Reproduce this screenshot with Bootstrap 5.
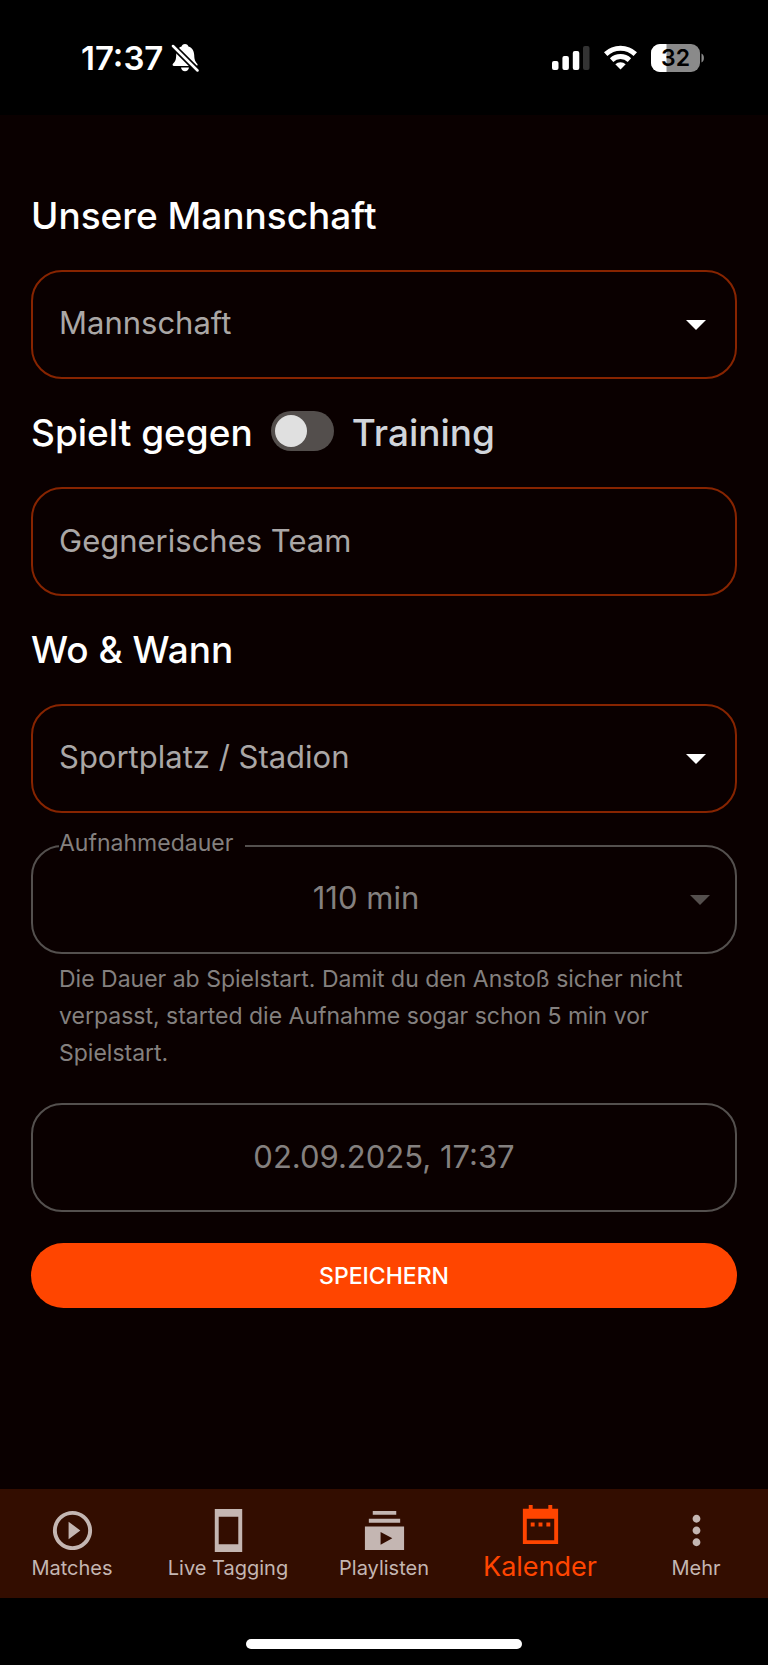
<!DOCTYPE html>
<html lang="de">
<head>
<meta charset="utf-8">
<meta name="viewport" content="width=device-width, initial-scale=1">
<title>Kalender</title>
<link href="https://cdn.jsdelivr.net/npm/bootstrap@5.3.0/dist/css/bootstrap.min.css" rel="stylesheet">
<style>
  body { background: #000; color: #fff; font-family: Inter, "Liberation Sans", sans-serif; }
  svg { display: block; }
  .statusbar { height: 115px; padding: 0 64px 0 81px; }
  .clock { font-size: 33px; font-weight: 600; line-height: 40px; }
  .status-icons { gap: 14px; }
  .app { background: #0a0000; padding: 47px 31px 0; }
  .section-head { height: 108px; padding-bottom: 1px; gap: 18px; }
  .section-head h2, .section-head label { font-size: 37px; font-weight: 500; line-height: 48px; margin: 0; }
  .section-head label { color: #d1d5db; }
  .field.form-control, .field.form-select {
    height: 109px; border: 2px solid #872400; border-radius: 31px; background-color: transparent;
    color: #aaa7a6; font-size: 31px; line-height: 40px; padding: 0 26px 3px; box-shadow: none;
  }
  .field.form-select {
    background-image: url("data:image/svg+xml,%3Csvg xmlns='http://www.w3.org/2000/svg' viewBox='0 0 20 10'%3E%3Cpath fill='%23fff' d='M0 0h20L10 10z'/%3E%3C/svg%3E");
    background-size: 20px 10px; background-position: right 29px center;
  }
  .field option { color: #000; }
  .field.form-control::placeholder { color: #aaa7a6; opacity: 1; }
  .field:disabled { border-color: #54504e !important; color: #84807f !important; opacity: 1; text-align: center; text-align-last: center; -webkit-text-fill-color: #84807f; }
  .field.form-select:disabled {
    background-image: url("data:image/svg+xml,%3Csvg xmlns='http://www.w3.org/2000/svg' viewBox='0 0 20 10'%3E%3Cpath fill='%23544f4d' d='M0 0h20L10 10z'/%3E%3C/svg%3E");
    background-position: right 25px center; padding-right: 62px;
  }
  .outline-label { position: absolute; left: 28px; top: -18px; background: #0a0000; color: #84807f; font-size: 23px; line-height: 32px; padding-right: 12px; }
  .hint { color: #84807f; font-size: 23px; line-height: 37px; margin: 7px 27px 31px 28px; }
  .toggle.form-check-input {
    width: 63px; height: 40px; margin: 0 0 4px; border: 0; border-radius: 20px; background-color: #534e4c; box-shadow: none;
    background-image: url("data:image/svg+xml,%3Csvg xmlns='http://www.w3.org/2000/svg' viewBox='0 0 40 40'%3E%3Ccircle cx='20' cy='20' r='16' fill='%23e0e0e0'/%3E%3C/svg%3E");
    background-size: 40px 40px; background-position: left center; background-repeat: no-repeat;
  }
  .toggle.form-check-input:checked { background-color: #ff4500; background-position: right center; }
  .btn-save { --bs-btn-bg: #ff4500; --bs-btn-color: #fff; --bs-btn-hover-bg: #e63e00; --bs-btn-hover-color: #fff; height: 65px; margin-top: 31px; border: 0; border-radius: 33px; font-size: 23px; font-weight: 500; line-height: 32px; }
  .tabs { background: #330d00; height: 109px; overflow: hidden; }
  .tab { flex: 0 0 156px; height: 109px; padding-top: 18px; color: #c4b6b2; text-decoration: none; font-size: 20px; line-height: 28px; }
  .tab svg { width: 47px; height: 47px; fill: currentColor; }
  .tab.active { color: #ff4500; font-size: 27px; line-height: 38px; padding-top: 12px; }
  .home-area { height: 67px; padding-top: 41px; }
  .home-bar { width: 36%; height: 10px; border-radius: 5px; background: #fff; }
</style>
</head>
<body>
<div class="d-flex flex-column min-vh-100">
  <header class="statusbar d-flex align-items-center justify-content-between">
    <div class="d-flex align-items-center gap-2">
      <span class="clock">17:37</span>
      <svg width="28" height="30" viewBox="0 0 28 30" aria-label="Stumm">
        <path fill="#fff" d="M14 1c2 0 3 1 3.400 2.400C21.500 4.600 23 8 23.200 12c.2 5 1 6.500 3 8.700.8 1 .3 2.300-1 2.300H3c-1.300 0-1.900-1.300-1-2.300 2.500-2.500 3-4 3.200-8.700C5.400 8 6.700 4.600 10.600 3.400 11 2 12 1 14 1zM10 24.500h8c-.3 2.300-1.900 3.700-4 3.700s-3.700-1.400-4-3.700z"/>
        <path stroke="#000" stroke-width="6" d="M1.500 2.500 27 28"/>
        <path stroke="#fff" stroke-width="2.500" stroke-linecap="round" d="M2 3l24.500 24.500"/>
      </svg>
    </div>
    <div class="status-icons d-flex align-items-center">
      <svg width="38" height="24" viewBox="0 0 38 24" aria-label="Mobilfunk">
        <g fill="#fff"><rect y="15" width="6.500" height="9" rx="2"/><rect x="10.400" y="10" width="6.500" height="14" rx="2"/><rect x="20.800" y="5" width="6.500" height="19" rx="2"/></g>
        <rect x="31" width="6.500" height="24" rx="2" fill="#333"/>
      </svg>
      <svg width="33" height="25" viewBox="0 0 33 25" aria-label="WLAN">
        <g fill="none" stroke="#fff" stroke-width="5"><path d="M1.700 9.100a21.500 21.500 0 0 1 29.600 0"/><path d="M7.600 15.100a13 13 0 0 1 17.800 0"/></g>
        <path fill="#fff" d="M16.500 24.500l-5.200-5.300a7.600 7.600 0 0 1 10.400 0z"/>
      </svg>
      <svg width="53" height="28" viewBox="0 0 53 28" aria-label="Akku 32 Prozent">
        <rect width="49" height="28" rx="9" fill="#8a8a8a"/>
        <path fill="#fff" d="M9 0h6.500v28H9a9 9 0 0 1-9-9V9a9 9 0 0 1 9-9z"/>
        <path fill="#8a8a8a" d="M50.500 9.500c3.200 1.500 3.200 7.500 0 9z"/>
        <text x="24.500" y="22" text-anchor="middle" font-family="Inter" font-size="23" font-weight="600">32</text>
      </svg>
    </div>
  </header>

  <main class="app flex-grow-1">
    <form>
      <div class="section-head d-flex align-items-center"><h2>Unsere Mannschaft</h2></div>
      <select class="field form-select" aria-label="Mannschaft"><option>Mannschaft</option></select>

      <div class="section-head d-flex align-items-center">
        <h2>Spielt gegen</h2>
        <input class="toggle form-check-input" type="checkbox" role="switch" id="training">
        <label for="training">Training</label>
      </div>
      <input class="field form-control" type="text" placeholder="Gegnerisches Team" aria-label="Gegnerisches Team">

      <div class="section-head d-flex align-items-center"><h2>Wo &amp; Wann</h2></div>
      <select class="field form-select" aria-label="Sportplatz / Stadion"><option>Sportplatz / Stadion</option></select>

      <div class="mt-4 pt-2">
        <div class="position-relative">
          <select class="field form-select" id="dauer" aria-describedby="dauer-hint" disabled><option>110 min</option></select>
          <label class="outline-label" for="dauer">Aufnahmedauer</label>
        </div>
        <p class="hint" id="dauer-hint">Die Dauer ab Spielstart. Damit du den Anstoß sicher nicht verpasst, started die Aufnahme sogar schon 5 min vor Spielstart.</p>
      </div>

      <input class="field form-control" type="text" value="02.09.2025, 17:37" aria-label="Datum und Uhrzeit" disabled>
      <button class="btn btn-save w-100 text-uppercase" type="button">Speichern</button>
    </form>
  </main>

  <nav class="tabs d-flex justify-content-center">
    <a class="tab d-flex flex-column align-items-center" href="#">
      <svg viewBox="0 0 24 24"><path d="M10 16.500l6-4.500-6-4.500v9zM12 2C6.480 2 2 6.480 2 12s4.480 10 10 10 10-4.480 10-10S17.520 2 12 2zm0 18c-4.410 0-8-3.590-8-8s3.590-8 8-8 8 3.590 8 8-3.590 8-8 8z"/></svg>
      <span>Matches</span>
    </a>
    <a class="tab d-flex flex-column align-items-center" href="#">
      <svg viewBox="0 0 24 24"><path d="M5 1v22h14V1H5zm12 18H7V5h10v14z"/></svg>
      <span>Live Tagging</span>
    </a>
    <a class="tab d-flex flex-column align-items-center" href="#">
      <svg viewBox="0 0 24 24"><path d="M20 8H4V6h16v2zm-2-6H6v2h12V2zm4 8v12H2V10h20zm-6 6l-6-3.270v6.530L16 16z"/></svg>
      <span>Playlisten</span>
    </a>
    <a class="tab active d-flex flex-column align-items-center" href="#" aria-current="page">
      <svg viewBox="0 0 24 24"><path d="M9 11H7v2h2v-2zm4 0h-2v2h2v-2zm4 0h-2v2h2v-2zm4-7h-3V2h-2v2H8V2H6v2H3v18h18V4zm-2 16H5V9h14v11z"/></svg>
      <span>Kalender</span>
    </a>
    <a class="tab d-flex flex-column align-items-center" href="#">
      <svg viewBox="0 0 24 24"><path d="M12 8c1.100 0 2-.9 2-2s-.9-2-2-2-2 .9-2 2 .9 2 2 2zm0 2c-1.100 0-2 .9-2 2s.9 2 2 2 2-.9 2-2-.9-2-2-2zm0 6c-1.100 0-2 .9-2 2s.9 2 2 2 2-.9 2-2-.9-2-2-2z"/></svg>
      <span>Mehr</span>
    </a>
  </nav>
  <div class="home-area"><div class="home-bar mx-auto"></div></div>
</div>
<script src="https://cdn.jsdelivr.net/npm/bootstrap@5.3.0/dist/js/bootstrap.bundle.min.js"></script>
</body>
</html>
